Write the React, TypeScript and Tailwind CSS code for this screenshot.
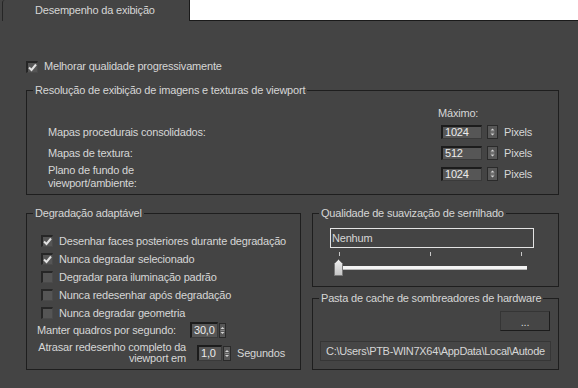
import React from "react";

const Check = ({ checked }: { checked?: boolean }) => (
  <div className="w-[12px] h-[12px] shrink-0 bg-[#555555] border-t-2 border-l-2 border-[#262626] border-r border-b border-r-[#4a4a4a] border-b-[#4a4a4a] flex items-center justify-center">
    {checked && (
      <svg width="9" height="9" viewBox="0 0 9 9">
        <polyline points="1,4.5 3.5,7 8,1.5" fill="none" stroke="#e2e2e2" strokeWidth="2" />
      </svg>
    )}
  </div>
);

const Spinner = ({ w, h }: { w: number; h: number }) => (
  <svg width={w} height={h} viewBox={`0 0 ${w} ${h}`} className="shrink-0">
    <rect x="0.5" y="0.5" width={w - 1} height={h - 1} fill="#575757" stroke="#2a2a2a" />
    <polygon points={`${w / 2 - 2},${h / 2 - 1.5} ${w / 2 + 2},${h / 2 - 1.5} ${w / 2},${h / 2 - 3.5}`} fill="#d4d4d4" />
    <line x1={w / 2 - 2} x2={w / 2 + 2} y1={h / 2} y2={h / 2} stroke="#8a8a8a" />
    <polygon points={`${w / 2 - 2},${h / 2 + 1.5} ${w / 2 + 2},${h / 2 + 1.5} ${w / 2},${h / 2 + 3.5}`} fill="#d4d4d4" />
  </svg>
);

const Field = ({ value, cls }: { value: string; cls: string }) => (
  <div className={`${cls} shrink-0 bg-[#565656] border-t-2 border-l-2 border-[#1c1c1c] border-r border-b border-r-[#3a3a3a] border-b-[#3a3a3a] pl-[2px] flex items-center text-[#ececec]`}>
    {value}
  </div>
);

export default function App() {
  return (
    <div className="w-[578px] h-[388px] bg-[#444444] overflow-hidden text-[11px] tracking-[-0.2px] text-[#d6d6d6] font-['Liberation_Sans',Arial,sans-serif]">
      {/* tab bar */}
      <div className="flex h-[21px]">
        <div className="w-[2px]" />
        <div className="w-[187px] border-l border-[#262626] rounded-tl-[3px] pl-[32px] leading-[20px]">
          Desempenho da exibição
        </div>
        <div className="flex-1 bg-white border-l border-b border-[#1a1a1a]" />
      </div>

      {/* top checkbox */}
      <div className="mt-[39px] ml-[26px] flex items-center gap-[6px] h-[13px]">
        <Check checked />
        <span className="leading-[13px]">Melhorar qualidade progressivamente</span>
      </div>

      {/* group 1 */}
      <fieldset className="ml-[26px] mt-[11px] w-[533px] h-[111px] min-w-0 border border-[#1e1e1e] p-0 m-0">
        <legend className="ml-[6px] px-[2px] leading-[12px]">
          Resolução de exibição de imagens e texturas de viewport
        </legend>
        <div className="mt-[11px] pl-[411px] leading-[13px]">Máximo:</div>
        <div className="mt-[5px] flex items-center h-[14px]">
          <div className="ml-[21px] w-[390px] leading-[13px]">Mapas procedurais consolidados:</div>
          <Field value="1024" cls="ml-[3px] w-[41px] h-[14px]" />
          <div className="ml-[5px] flex"><Spinner w={11} h={14} /></div>
          <span className="ml-[6px]">Pixels</span>
        </div>
        <div className="mt-[7px] flex items-center h-[14px]">
          <div className="ml-[21px] w-[390px] leading-[13px]">Mapas de textura:</div>
          <Field value="512" cls="ml-[3px] w-[41px] h-[14px]" />
          <div className="ml-[5px] flex"><Spinner w={11} h={14} /></div>
          <span className="ml-[6px]">Pixels</span>
        </div>
        <div className="mt-[7px] flex items-start h-[14px]">
          <div className="ml-[21px] w-[390px] leading-[13px] -mt-[3px]">
            Plano de fundo de
            <br />
            viewport/ambiente:
          </div>
          <Field value="1024" cls="ml-[3px] w-[41px] h-[14px]" />
          <div className="ml-[5px] flex"><Spinner w={11} h={14} /></div>
          <span className="ml-[6px] leading-[14px]">Pixels</span>
        </div>
      </fieldset>

      {/* bottom row */}
      <div className="flex ml-[26px] mt-[12px] gap-[11px]">
        <fieldset className="w-[275px] h-[163px] min-w-0 border border-[#1e1e1e] p-0 m-0">
          <legend className="ml-[6px] px-[2px] leading-[12px]">Degradação adaptável</legend>
          <div className="mt-[13px] flex flex-col">
            {[
              ["Desenhar faces posteriores durante degradação", true],
              ["Nunca degradar selecionado", true],
              ["Degradar para iluminação padrão", false],
              ["Nunca redesenhar após degradação", false],
              ["Nunca degradar geometria", false],
            ].map(([label, c]) => (
              <div key={label as string} className="h-[18px] flex items-center pl-[14px] gap-[6px]">
                <Check checked={c as boolean} />
                <span className="leading-[13px] whitespace-nowrap">{label as string}</span>
              </div>
            ))}
          </div>
          <div className="h-[16px] flex items-center pl-[10px]">
            <span className="w-[153px] leading-[13px] whitespace-nowrap">Manter quadros por segundo:</span>
            <Field value="30,0" cls="w-[28px] h-[16px]" />
            <div className="ml-[1px] flex"><Spinner w={7} h={15} /></div>
          </div>
          <div className="mt-[4px] flex items-center">
            <div className="ml-[9px] w-[150px] text-right leading-[11px] whitespace-nowrap">
              Atrasar redesenho completo da
              <br />
              viewport em
            </div>
            <Field value="1,0" cls="ml-[11px] w-[25px] h-[16px]" />
            <div className="ml-[1px] flex"><Spinner w={8} h={15} /></div>
            <span className="ml-[6px]">Segundos</span>
          </div>
        </fieldset>

        <div className="flex flex-col gap-[5px]">
          <fieldset className="w-[247px] h-[80px] min-w-0 border border-[#1e1e1e] p-0 m-0">
            <legend className="ml-[6px] px-[2px] leading-[12px]">Qualidade de suavização de serrilhado</legend>
            <div className="mt-[9px] ml-[17px] w-[204px] h-[20px] border border-[#e4e4e4] pl-[1px] leading-[18px]">
              Nenhum
            </div>
            <div className="relative mt-[4px] ml-[21px] w-[194px] h-[24px]">
              <div className="absolute left-[5px] top-0 w-[1px] h-[4px] bg-[#c8c8c8]" />
              <div className="absolute left-[96px] top-0 w-[1px] h-[4px] bg-[#c8c8c8]" />
              <div className="absolute left-[187px] top-0 w-[1px] h-[4px] bg-[#c8c8c8]" />
              <div className="absolute left-[9px] top-[14px] w-[184px] h-[4px] bg-[#f4f4f4] border-b border-[#b8b8b8]" />
              <svg className="absolute left-0 top-[7px]" width="9" height="17" viewBox="0 0 9 17">
                <defs>
                  <linearGradient id="th" x1="0" y1="0" x2="0" y2="1">
                    <stop offset="0" stopColor="#f0f0f0" />
                    <stop offset="1" stopColor="#c4c4c4" />
                  </linearGradient>
                </defs>
                <path d="M0.5 4.5 L4.5 0.5 L8.5 4.5 V16.5 H0.5 Z" fill="url(#th)" stroke="#7a7a7a" />
              </svg>
            </div>
          </fieldset>
          <fieldset className="w-[247px] h-[78px] min-w-0 border border-[#1e1e1e] p-0 m-0">
            <legend className="ml-[6px] px-[2px] leading-[12px]">Pasta de cache de sombreadores de hardware</legend>
            <div className="flex flex-col">
              <div className="mt-[7px] self-end mr-[8px] w-[50px] h-[20px] border border-[#353535] border-r-[#1c1c1c] border-b-[#1c1c1c] bg-[#454545] flex items-end justify-center pb-[2px] leading-[12px]">
                ...
              </div>
              <div className="mt-[10px] ml-[7px] w-[231px] h-[20px] bg-[#464646] border border-[#363636] pl-[5px] leading-[18px] whitespace-nowrap overflow-hidden tracking-[-0.3px]">
                C:\Users\PTB-WIN7X64\AppData\Local\Autode
              </div>
            </div>
          </fieldset>
        </div>
      </div>
    </div>
  );
}
